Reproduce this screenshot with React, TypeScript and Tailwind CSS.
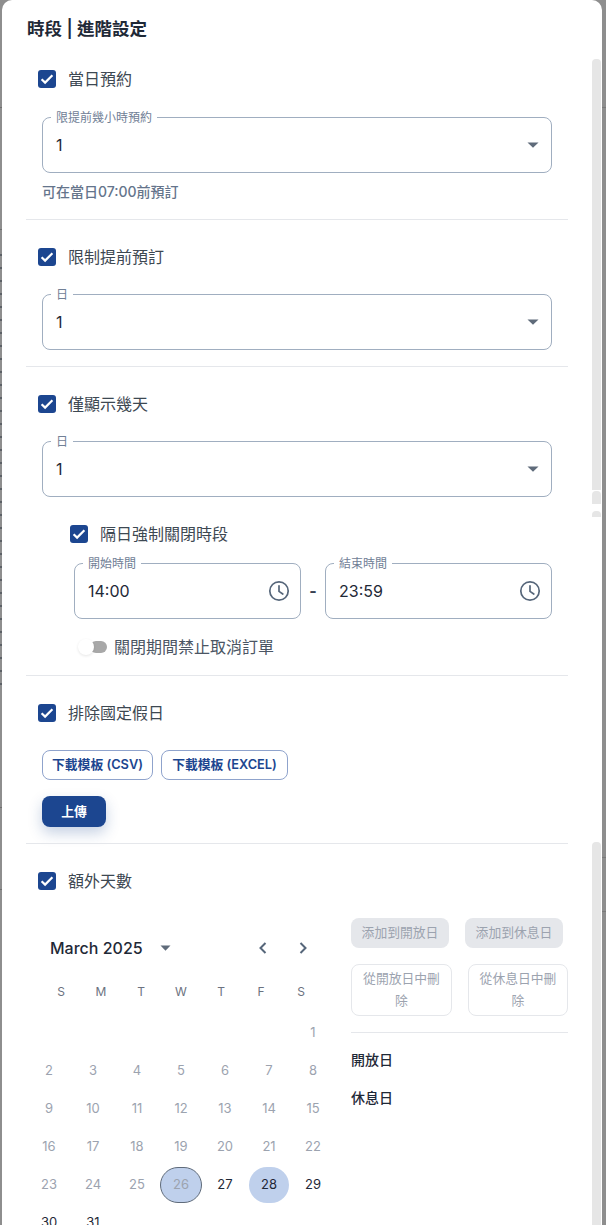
import React from "react";

const FONT = "font-['Inter','Noto_Sans_CJK_TC','Noto_Sans',sans-serif]";

function Check({ label, indent }: { label: string; indent?: boolean }) {
  return (
    <div className={`flex items-center h-[18px] gap-[12px] ${indent ? "pl-[44px]" : "pl-[12px]"}`}>
      <span className="w-[18px] h-[18px] rounded-[3px] bg-[#1c4690] flex items-center justify-center shrink-0">
        <svg width="18" height="18" viewBox="0 0 18 18" fill="none">
          <path d="M3.6 9.2 7.1 12.6 14.4 5.3" stroke="#fff" strokeWidth="2.2" />
        </svg>
      </span>
      <span className="text-[16px] leading-[24px] text-[#3d4852]">{label}</span>
    </div>
  );
}

function Field({ legend, value, className, icon }: { legend: string; value: string; className?: string; icon: "select" | "clock" }) {
  return (
    <fieldset className={`relative h-[56px] rounded-[8px] border border-[#a0aec0] ${className ?? ""}`}>
      <span className="absolute left-[8px] top-[-8px] bg-white px-[5px] text-[12px] leading-[15px] text-[#718096]">{legend}</span>
      <div className="flex h-full items-center justify-between pl-[13px] pr-[11px]">
        <span className="text-[16px] text-[#1f2937]">{value}</span>
        {icon === "select" ? (
          <svg width="12" height="6" viewBox="0 0 12 6" className="mr-[1px]"><path d="M0.5 0.5h11L6 5.8z" fill="#5f6b7a" /></svg>
        ) : (
          <svg width="24" height="24" viewBox="0 0 24 24" fill="none" stroke="#56667a" strokeWidth="1.7" className="mr-[-2px]">
            <circle cx="12" cy="12" r="9.2" />
            <path d="M12 6.8V12.4L15.8 15" strokeLinecap="round" />
          </svg>
        )}
      </div>
    </fieldset>
  );
}

const Divider = () => <div className="h-px bg-[#e5e7eb] ml-[24px] mr-[34px]" />;

const weekdays = ["S", "M", "T", "W", "T", "F", "S"];
const days: (number | null)[] = [
  null, null, null, null, null, null, 1,
  ...Array.from({ length: 30 }, (_, i) => i + 2),
];

function Day({ d }: { d: number | null }) {
  if (d === null) return <span className="h-[38px]" />;
  const cls = d === 26
    ? "w-[42px] h-[36px] rounded-full bg-[#bfd0ec] border border-[#5f6b7a] text-[#9ca3af]"
    : d === 28
      ? "w-[40px] h-[36px] rounded-full bg-[#bfd0ec] text-[#1f2937]"
      : d >= 27
        ? "text-[#1f2937]"
        : "text-[#9ca3af]";
  return (
    <span className="h-[38px] flex items-center justify-center">
      <span className={`flex items-center justify-center text-[13px] ${cls}`}>{d}</span>
    </span>
  );
}

export default function App() {
  return (
    <div className={`relative h-[1225px] w-[606px] overflow-hidden bg-[#8e8e8e] pl-[2px] pr-[4px] ${FONT}`}>
      <div className="absolute left-0 top-[254px] h-[436px] w-[2px] bg-[repeating-linear-gradient(to_bottom,#5c6066_0,#5c6066_2px,#8e8e8e_2px,#8e8e8e_13px)]" />
      <div className="absolute left-0 top-[107px] h-px w-[2px] bg-[#6f6f6f]" />
      <div className="absolute left-0 top-[229px] h-px w-[2px] bg-[#6f6f6f]" />
      <div className="absolute left-0 top-[807px] h-px w-[2px] bg-[#6f6f6f]" />
      <div className="absolute left-0 top-[889px] h-px w-[2px] bg-[#6f6f6f]" />
      <div className="absolute right-0 top-[107px] h-px w-[4px] bg-[#7a7a7a]" />
      <div className="absolute right-0 top-[857px] h-px w-[4px] bg-[#7a7a7a]" />
      <div className="absolute right-0 top-[911px] h-px w-[4px] bg-[#7a7a7a]" />
      <div className="relative h-[1225px] w-[600px] overflow-hidden rounded-t-[10px] bg-white">
        <h1 className="pl-[25px] pt-[18px] text-[17.5px] leading-[22px] font-semibold text-[#1f2937]">時段 | 進階設定</h1>

        <section className="pt-[30px] pl-[24px]">
          <Check label="當日預約" />
          <Field legend="限提前幾小時預約" value="1" icon="select" className="mt-[29px] ml-[16px] w-[510px]" />
          <p className="mt-[9px] ml-[16px] text-[14px] leading-[20px] font-medium text-[#64748b]">可在當日07:00前預訂</p>
        </section>
        <div className="mt-[17px]"><Divider /></div>

        <section className="pt-[28px] pl-[24px]">
          <Check label="限制提前預訂" />
          <Field legend="日" value="1" icon="select" className="mt-[28px] ml-[16px] w-[510px]" />
        </section>
        <div className="mt-[16px]"><Divider /></div>

        <section className="pt-[28px] pl-[24px]">
          <Check label="僅顯示幾天" />
          <Field legend="日" value="1" icon="select" className="mt-[28px] ml-[16px] w-[510px]" />
          <div className="mt-[28px]"><Check label="隔日強制關閉時段" indent /></div>
          <div className="mt-[20px] ml-[48px] flex items-center w-[478px]">
            <Field legend="開始時間" value="14:00" icon="clock" className="w-[227px]" />
            <span className="w-[24px] text-center text-[16px] font-bold text-[#374151]">-</span>
            <Field legend="結束時間" value="23:59" icon="clock" className="w-[227px]" />
          </div>
          <div className="mt-[18px] ml-[50px] flex items-center gap-[6px] h-[20px]">
            <span className="relative block w-[32px] h-[12px]">
              <span className="absolute left-[14px] top-0 h-[12px] w-[17px] rounded-full bg-[#a8a8a8]" />
              <span className="absolute left-[2px] top-[-2px] h-[16px] w-[16px] rounded-full bg-white shadow-[0_1px_3px_rgba(0,0,0,0.1)]" />
            </span>
            <span className="text-[16px] leading-[24px] text-[#4b5563]">關閉期間禁止取消訂單</span>
          </div>
        </section>
        <div className="mt-[18px]"><Divider /></div>

        <section className="pt-[28px] pl-[24px]">
          <Check label="排除國定假日" />
          <div className="mt-[28px] ml-[16px] flex gap-[8px]">
            <button className="h-[30px] w-[111px] rounded-[8px] border border-[#8fa3cc] text-[12.8px] font-semibold text-[#1c4690]">下載模板 (CSV)</button>
            <button className="h-[30px] w-[127px] rounded-[8px] border border-[#8fa3cc] text-[12.8px] font-semibold text-[#1c4690]">下載模板 (EXCEL)</button>
          </div>
          <button className="mt-[16px] ml-[16px] block h-[31px] w-[64px] rounded-[8px] bg-[#1c4690] text-[12.8px] font-semibold text-white shadow-[0_6px_14px_rgba(28,70,144,0.25)]">上傳</button>
        </section>
        <div className="mt-[16px]"><Divider /></div>

        <section className="pt-[28px] pl-[24px]">
          <Check label="額外天數" />
          <div className="mt-[28px] flex">
            <div className="w-[308px] ml-[1px] pt-[14px] shrink-0">
              <div className="flex items-center h-[30px] mt-[1px] pl-[23px] w-[308px]">
                <span className="text-[16px] font-medium text-[#1f2937]">March 2025</span>
                <svg width="12" height="6" viewBox="0 0 12 6" className="ml-[17px]"><path d="M0.5 0.5h10L5.5 5.8z" fill="#5f6b7a" /></svg>
                <div className="ml-auto mr-[26px] flex gap-[28px]">
                  <svg width="12" height="14" viewBox="0 0 12 14" fill="none" stroke="#56667a" strokeWidth="2"><path d="M8.5 2 3.5 7l5 5" /></svg>
                  <svg width="12" height="14" viewBox="0 0 12 14" fill="none" stroke="#56667a" strokeWidth="2"><path d="M3.5 2l5 5-5 5" /></svg>
                </div>
              </div>
              <div className="grid grid-cols-[repeat(7,40px)] ml-[14px] mt-[19px] h-[20px] items-center">
                {weekdays.map((w, i) => (
                  <span key={i} className="text-center text-[12px] text-[#6b7280]">{w}</span>
                ))}
              </div>
              <div className="grid grid-cols-[repeat(7,44px)] mt-[12px]">
                {days.map((d, i) => <Day key={i} d={d} />)}
              </div>
            </div>
            <div className="ml-[16px] w-[217px] shrink-0">
              <div className="flex justify-between w-[212px]">
                <button className="h-[30px] w-[98px] rounded-[8px] bg-[#e5e7eb] text-[12.8px] text-[#9ca3af]">添加到開放日</button>
                <button className="h-[30px] w-[98px] rounded-[8px] bg-[#e5e7eb] text-[12.8px] text-[#9ca3af]">添加到休息日</button>
              </div>
              <div className="mt-[16px] flex justify-between">
                <button className="h-[52px] w-[101px] rounded-[8px] border border-[#e5e7eb] px-[10px] text-[12.8px] leading-[22px] text-[#9ca3af]">從開放日中刪除</button>
                <button className="h-[52px] w-[100px] rounded-[8px] border border-[#e5e7eb] px-[10px] text-[12.8px] leading-[22px] text-[#9ca3af]">從休息日中刪除</button>
              </div>
              <div className="mt-[16px] h-px bg-[#e5e7eb]" />
              <p className="mt-[17px] text-[14px] leading-[20px] font-medium text-[#1f2937]">開放日</p>
              <p className="mt-[18px] text-[14px] leading-[20px] font-medium text-[#1f2937]">休息日</p>
            </div>
          </div>
        </section>

        <div className="absolute right-[1px] top-[59px] h-[431px] w-[9px] rounded-t-[4px] bg-[#e6e6e6]" />
        <div className="absolute right-[1px] top-[491px] h-[13px] w-[9px] rounded-t-[4px] bg-[#e6e6e6]" />
        <div className="absolute right-[1px] top-[511px] h-[6px] w-[9px] rounded-t-[4px] bg-[#e6e6e6]" />
        <div className="absolute right-[1px] top-[842px] h-[383px] w-[9px] rounded-t-[4px] bg-[#e6e6e6]" />
      </div>
    </div>
  );
}
